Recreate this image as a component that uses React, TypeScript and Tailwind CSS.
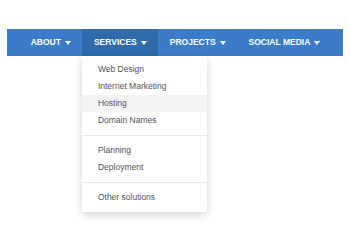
import React from 'react';

const navItems = ['About', 'Services', 'Projects', 'Social Media'];

const groups = [
  ['Web Design', 'Internet Marketing', 'Hosting', 'Domain Names'],
  ['Planning', 'Deployment'],
  ['Other solutions'],
];

function Caret() {
  return <span className="ml-[4px] inline-block w-0 h-0 border-l-[3px] border-r-[3px] border-t-[4px] border-l-transparent border-r-transparent border-t-white" />;
}

export default function App() {
  return (
    <div className="w-[350px] h-[250px] bg-white pt-[29px] px-[7px]" style={{ fontFamily: '"Liberation Sans", Arial, sans-serif' }}>
      <nav className="h-[27px] bg-[#3a7cc8] flex justify-center">
        {navItems.map((item) => {
          const active = item === 'Services';
          return (
            <div key={item} className={active ? 'relative bg-[#2f6aaa]' : 'relative'}>
              <div className="h-[27px] pl-3 pr-[11px] flex items-center text-white text-[8.5px] font-bold uppercase">
                {item}
                <Caret />
              </div>
              {active && (
                <div className="absolute left-0 top-full w-[125px] bg-white pt-[5px] pb-[6px] shadow-[0_3px_8px_rgba(0,0,0,0.18)] z-10">
                  {groups.map((g, i) => (
                    <div key={i}>
                      {i > 0 && <div className="my-[6px] h-px bg-[#e8e8e8]" />}
                      {g.map((label) => (
                        <div key={label}
                          className={'h-[17px] px-4 flex items-center text-[8.5px] text-[#555] whitespace-nowrap ' + (label === 'Hosting' ? 'bg-[#f3f3f3]' : '')}>
                          {label}
                        </div>
                      ))}
                    </div>
                  ))}
                </div>
              )}
            </div>
          );
        })}
      </nav>
    </div>
  );
}
